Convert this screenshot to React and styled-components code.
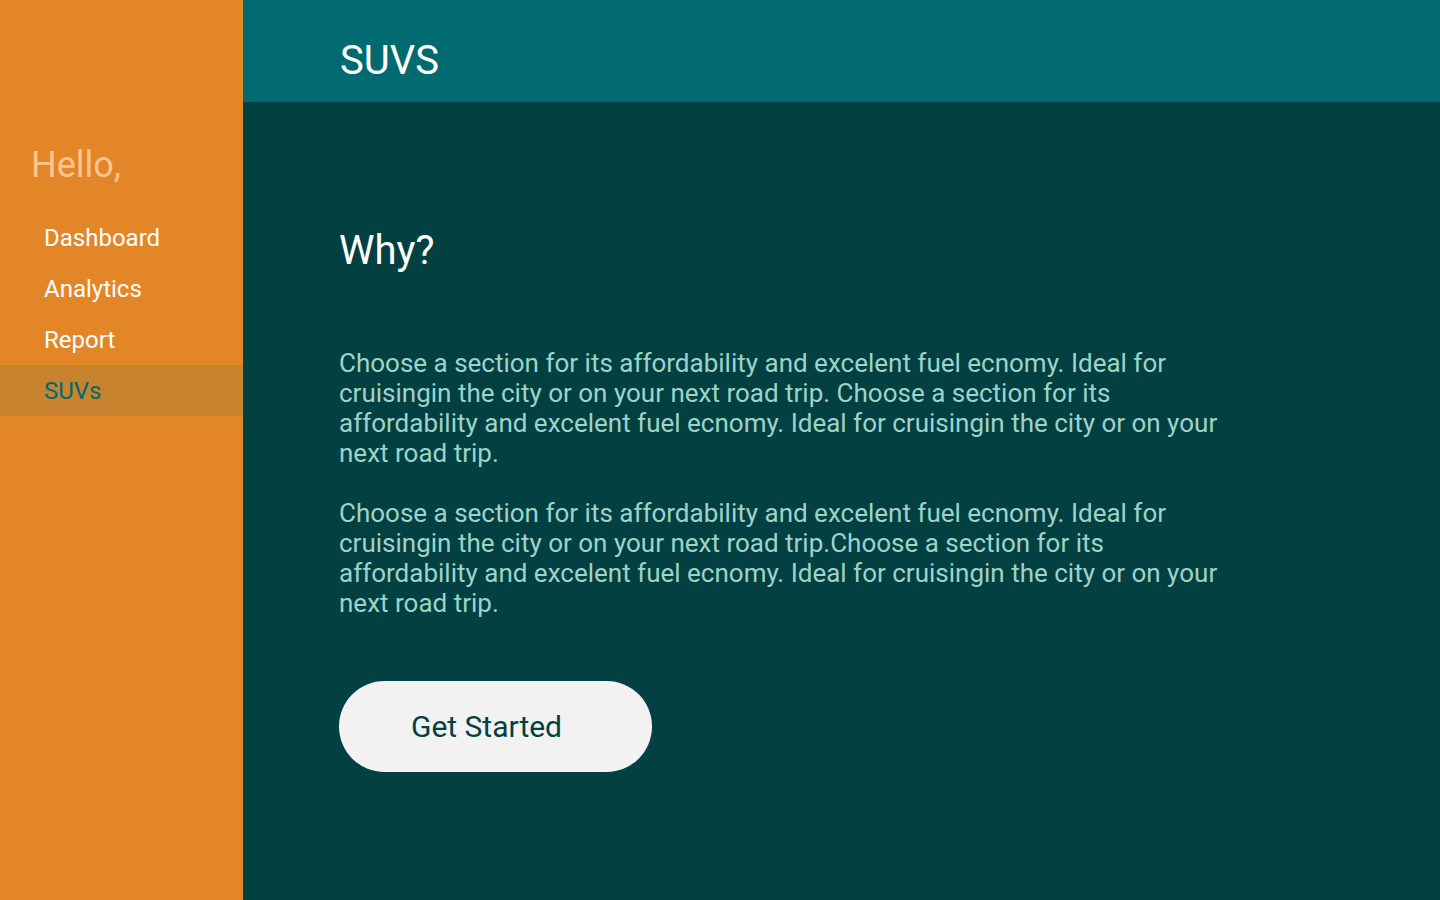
import React from "react";
import styled, { createGlobalStyle } from "styled-components";

const Global = createGlobalStyle`
  html, body { margin: 0; padding: 0; }
  body { font-family: Roboto, "Liberation Sans", sans-serif; }
  * { box-sizing: border-box; }
`;

const Layout = styled.div`
  display: flex;
  width: 100%;
  height: 100vh;
`;

const Sidebar = styled.aside`
  width: 243px;
  flex-shrink: 0;
  background: #e28627;
  padding-top: 140px;
  display: flex;
  flex-direction: column;
`;

const Greeting = styled.h2`
  margin: 0 0 22px 31px;
  font-size: 36px;
  font-weight: 400;
  line-height: 50px;
  color: #fcc58f;
`;

const NavList = styled.nav`
  display: flex;
  flex-direction: column;
`;

const NavItem = styled.a`
  display: flex;
  align-items: center;
  height: 51px;
  padding-left: 44px;
  font-size: 24px;
  text-decoration: none;
  color: ${(p) => (p.$active ? "#006a71" : "#ffffff")};
  background: ${(p) => (p.$active ? "#c9822e" : "transparent")};
`;

const Main = styled.main`
  flex: 1;
  display: flex;
  flex-direction: column;
  background: #024042;
`;

const Header = styled.header`
  height: 102px;
  background: #006a71;
  display: flex;
  align-items: center;
  padding: 20px 0 0 97px;
`;

const HeaderTitle = styled.h1`
  margin: 0;
  font-size: 40px;
  font-weight: 400;
  line-height: 50px;
  color: #ffffff;
`;

const Content = styled.section`
  padding: 124px 0 0 96px;
`;

const Heading = styled.h2`
  margin: 0 0 72px;
  font-size: 40px;
  font-weight: 400;
  line-height: 50px;
  color: #ffffff;
`;

const Paragraph = styled.p`
  margin: 0 0 30px;
  max-width: 900px;
  font-size: 26px;
  line-height: 30px;
  color: #9fd3c9;
`;

const Button = styled.button`
  margin-top: 33px;
  width: 313px;
  height: 91px;
  border: none;
  border-radius: 46px;
  background: #f2f2f2;
  color: #024042;
  font-family: Roboto, "Liberation Sans", sans-serif;
  font-size: 30px;
  padding: 0 18px 0 0;
  cursor: pointer;
`;

const text =
  "Choose a section for its affordability and excelent fuel ecnomy. Ideal for cruisingin the city or on your next road trip.";

export default function App() {
  return (
    <>
      <Global />
      <Layout>
        <Sidebar>
          <Greeting>Hello,</Greeting>
          <NavList>
            <NavItem href="#">Dashboard</NavItem>
            <NavItem href="#">Analytics</NavItem>
            <NavItem href="#">Report</NavItem>
            <NavItem href="#" $active>SUVs</NavItem>
          </NavList>
        </Sidebar>
        <Main>
          <Header>
            <HeaderTitle>SUVS</HeaderTitle>
          </Header>
          <Content>
            <Heading>Why?</Heading>
            <Paragraph>{text} {text}</Paragraph>
            <Paragraph>{text}{text}</Paragraph>
            <Button>Get Started</Button>
          </Content>
        </Main>
      </Layout>
    </>
  );
}
